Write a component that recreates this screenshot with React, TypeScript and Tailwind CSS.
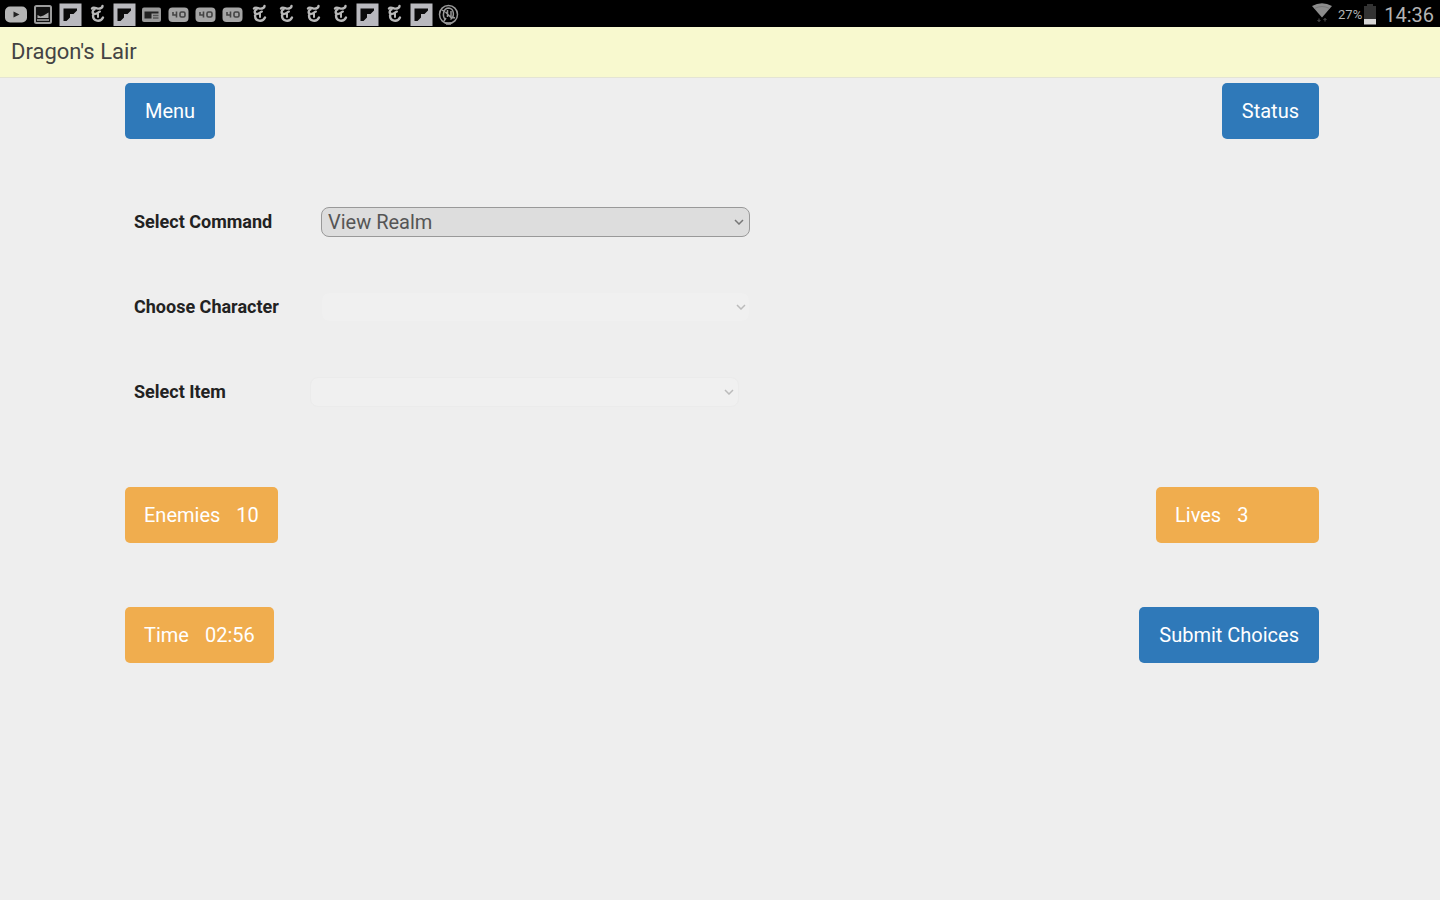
import type { ReactNode } from "react";

type IconKind = "video" | "image" | "flip" | "times" | "card" | "badge" | "ring";

const notifications: IconKind[] = [
  "video", "image", "flip", "times", "flip", "card", "badge", "badge", "badge",
  "times", "times", "times", "times", "flip", "times", "flip", "ring",
];

const drawings: Record<IconKind, ReactNode> = {
  video: (
    <>
      <rect x="2" y="6.500" width="22" height="16" rx="5" fill="#b5b5b5" />
      <path d="M10.500 11.500l6 3-6 3z" fill="#222" />
    </>
  ),
  image: (
    <>
      <rect x="5" y="6" width="16" height="17" rx="1.500" fill="#111" stroke="#9c9c9c" strokeWidth="2" />
      <path d="M7.500 15l3 1.500 3-1 5-3V18h-11z" fill="#aaa" />
      <path d="M7 20h12" stroke="#aaa" strokeWidth="1.500" />
    </>
  ),
  flip: (
    <>
      <rect x="2.500" y="3.500" width="22" height="22.500" fill="#b9b9be" />
      <path d="M6.500 8.500H20v2L16.500 14h-3.500v3.500L9.500 21h-3z" fill="#0b0b0b" />
    </>
  ),
  times: (
    <g fill="none" stroke="#b8b8b8" strokeLinecap="round">
      <path d="M8 8.500c2-2.500 5 1 8 0 1.500-.5 2.500-1.200 2.500-2.500" strokeWidth="2.400" />
      <path d="M10.500 9.500c-2.500 1-2.500 4 0 4.500M9 15.500c0 6 7.500 7 10 2" strokeWidth="2.400" />
      <path d="M10.500 14c2 0 3-1.500 5.500-2.500M14 13v4" strokeWidth="2" />
    </g>
  ),
  card: (
    <>
      <rect x="4" y="7.500" width="19" height="14.500" rx="2" fill="#999" />
      <path d="M6.500 11.500h14v2h-7v5h-7z" fill="#222" />
      <path d="M15 15.500h5.500M15 18h5.500" stroke="#555" strokeWidth="1.300" />
    </>
  ),
  badge: (
    <>
      <rect x="3.500" y="7.500" width="20" height="14.500" rx="4" fill="#a5a5a5" />
      <g fill="none" stroke="#444" strokeWidth="1.600">
        <path d="M8 12v3h4M11.500 11.500v6" />
        <rect x="15" y="12" width="5" height="5" rx="1.500" />
      </g>
    </>
  ),
  ring: (
    <g fill="none" stroke="#999" strokeWidth="1.500">
      <circle cx="13.500" cy="14.500" r="9" />
      <path d="M14 8c-6 0-7 8-3.500 12M14 8c5 1 6 8 1.500 11.500M10.500 12l6 6M12.500 10v7M16 11v6M7 10l3 2M20 18l-3-1M9 21l2-3" />
      <path d="M11 23.500h5" strokeWidth="2.500" />
    </g>
  ),
};

function StatusBar() {
  return (
    <div className="flex h-[27px] items-center justify-between bg-black pl-[3px] pr-[6px]">
      <div className="flex">
        {notifications.map((kind, i) => (
          <svg key={i} viewBox="0 0 27 27" className="size-[27px]" aria-hidden="true">
            {drawings[kind]}
          </svg>
        ))}
      </div>
      <div className="flex items-center text-[#b4b4b4]">
        <svg viewBox="0 0 22 27" className="h-[27px] w-[22px]" aria-hidden="true">
          <path d="M1 6Q11 .5 21 6L11 17.500z" fill="#8c8c8c" />
          <path d="M3.500 8.500Q11 4.500 18.500 8.500" fill="none" stroke="#777" />
          <path d="M8 18.500v3M6.500 20L8 21.500 9.500 20M14 21.500v-3M12.500 20l1.500-1.500 1.500 1.500" fill="none" stroke="#555" />
        </svg>
        <span className="ml-[5px] pt-[2px] text-[13px] leading-[25px]">27%</span>
        <svg viewBox="0 0 12 27" className="ml-[2px] h-[27px] w-[12px]" aria-hidden="true">
          <path d="M3 4h6v2h3v14H0V6h3z" fill="#333" />
          <path d="M0 19h12v5.500H0z" fill="#d5d5d5" />
        </svg>
        <span className="ml-[8px] pt-[4px] text-[20px] leading-[23px]">14:36</span>
      </div>
    </div>
  );
}

interface FieldProps {
  id: string;
  label: string;
  options?: string[];
  labelClass: string;
  selectClass: string;
  chevronClass: string;
}

function Field({ id, label, options = [], labelClass, selectClass, chevronClass }: FieldProps) {
  return (
    <div className="flex h-[30px] items-center">
      <label htmlFor={id} className={`shrink-0 text-[18px] font-bold leading-[30px] text-[#222] ${labelClass}`}>
        {label}
      </label>
      <div className="relative w-full max-w-[429px]">
        <select
          id={id}
          disabled={options.length === 0}
          className={`block h-[30px] w-full appearance-none rounded-[8px] border pl-[6px] pr-[24px] text-[20px] leading-[28px] text-[#555] ${selectClass}`}
        >
          {options.map((o) => (
            <option key={o}>{o}</option>
          ))}
        </select>
        <svg
          viewBox="0 0 10 6"
          className={`pointer-events-none absolute top-[12px] h-[6px] w-[10px] ${chevronClass}`}
          aria-hidden="true"
        >
          <path d="M1 1l4 4 4-4" fill="none" stroke="currentColor" strokeWidth="1.500" />
        </svg>
      </div>
    </div>
  );
}

const box = "h-[56px] rounded-[5px] text-[20px] leading-[56px] text-white";

function Action({ children }: { children: ReactNode }) {
  return (
    <button type="button" className={`${box} bg-[#2f79b9] px-[20px]`}>
      {children}
    </button>
  );
}

function Counter({ name, value, className = "" }: { name: string; value: string; className?: string }) {
  return (
    <div className={`${box} flex gap-[16px] bg-[#f0ad4e] px-[19px] ${className}`}>
      <span>{name}</span>
      <span>{value}</span>
    </div>
  );
}

export default function App() {
  return (
    <div className="min-h-screen bg-[#eeeeee] font-['Roboto',sans-serif]">
      <StatusBar />
      <header className="h-[51px] border-b border-[#e4e4d4] bg-[#f8f9cf] pl-[11px]">
        <h1 className="text-[22px] leading-[50px] text-[#444]">Dragon's Lair</h1>
      </header>
      <main className="pl-[125px] pr-[121px] pt-[5px]">
        <div className="flex justify-between">
          <Action>Menu</Action>
          <Action>Status</Action>
        </div>
        <form className="mt-[68px] flex flex-col gap-[55px] pl-[9px]">
          <Field
            id="command"
            label="Select Command"
            options={["View Realm"]}
            labelClass="w-[187px]"
            selectClass="border-[#999] bg-[#dddddd]"
            chevronClass="right-[6px] text-[#777]"
          />
          <Field
            id="character"
            label="Choose Character"
            labelClass="w-[187px]"
            selectClass="border-[#eeeeee] bg-[#f0f0f0]"
            chevronClass="right-[4px] text-[#bbb]"
          />
          <Field
            id="item"
            label="Select Item"
            labelClass="w-[176px]"
            selectClass="border-[#ebebeb] bg-[#f0f0f0]"
            chevronClass="right-[5px] text-[#bbb]"
          />
        </form>
        <div className="mt-[80px] flex justify-between">
          <Counter name="Enemies" value="10" />
          <Counter name="Lives" value="3" className="w-[163px]" />
        </div>
        <div className="mt-[64px] flex justify-between">
          <Counter name="Time" value="02:56" />
          <Action>Submit Choices</Action>
        </div>
      </main>
    </div>
  );
}
